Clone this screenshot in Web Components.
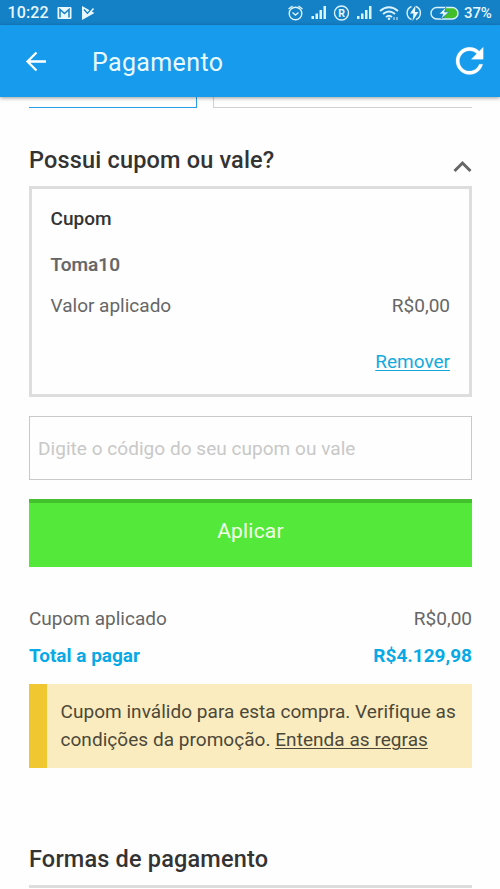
<!DOCTYPE html>
<html lang="pt-BR">
<head>
<meta charset="utf-8">
<title>Pagamento</title>
<style>
html,body{margin:0;height:889px;overflow:hidden;background:#fefefe}
body{font-family:Roboto,"Liberation Sans",sans-serif;color:#666}
</style>
</head>
<body>
<payment-page></payment-page>
<script>
const define=(name,html)=>customElements.define(name,class extends HTMLElement{
  constructor(){super();this.attachShadow({mode:'open'}).innerHTML=html;}
});

define('status-bar',`<style>
:host{display:flex;height:25px;box-sizing:border-box;padding:1px 8px 0 7.500px;align-items:center;justify-content:space-between;background:#1480c6;color:#e8f8ff;font-weight:500;font-size:16px;line-height:24px}
.left{display:flex;align-items:center}
.left span{width:49.500px;letter-spacing:.15px}
svg{display:block}
.pct{width:28px;font-size:15px;white-space:nowrap;letter-spacing:-.1px}
</style>
<div class="left"><span>10:22</span>
<svg width="40" height="24" viewBox="57 0 40 24"><rect x="57.500" y="6" width="14" height="12" rx="1" fill="#e8f8ff"/><path d="M60 16.500V8.500l4.500 4 4.500-4v8" fill="none" stroke="#1480c6" stroke-width="1.500"/><path d="M82 5l12.500 7-12.500 7z" fill="#e8f8ff"/><path d="M84 8.500l3.500 4 7-8" fill="none" stroke="#1480c6" stroke-width="1.500"/><path d="M83.500 10.500l4 4 6-7" fill="none" stroke="#e8f8ff" stroke-width="1.500"/></svg></div>
<svg width="174" height="24" viewBox="287 0 174 24" style="margin-left:auto;margin-right:3px" fill="none" stroke="#d9f3ff" stroke-width="1.400">
<circle cx="295.500" cy="12.500" r="6.300"/><path d="M288.500 8l4-3M302.500 8l-4-3M292.500 11.500l3 2.500 3-2.500"/>
<g fill="#d9f3ff" stroke="none"><path d="M311.500 15h2.500v3h-2.500zM315.500 12.500h2.500v5.500h-2.500zM319.500 9h2.500v9h-2.500zM323.500 5h2.500v13h-2.500z"/><path d="M357 15h2.500v3H357zM361 12.500h2.500v5.500H361zM365 9h2.500v9H365zM369 5h2.500v13H369z"/></g>
<circle cx="341.500" cy="12" r="7"/><text x="341.500" y="15.800" text-anchor="middle" font-size="10.500" font-weight="700" fill="#e8f8ff" stroke="none">R</text>
<g stroke-width="2"><path d="M380 10q9-7.500 18 0M383 13q6-5 12 0M386 16q3-2.500 6 0"/></g><circle cx="389" cy="17.800" r="1.300" fill="#d9f3ff" stroke="none"/><path d="M394 16v3M397 16v3" stroke-width="1"/>
<path d="M411.500 5.500a7 7 0 0 0 0 13M416 5.500a7 7 0 0 1 0 13"/><path d="M415.500 4.500l-5.500 8h3.500l-1 7.500 6-9h-3.500z" fill="#e8f8ff" stroke="none"/>
<path d="M446 7h8a4.500 4.500 0 0 1 4 4.500v1.500a4.500 4.500 0 0 1-4 4.500h-10z" fill="#43bd28" stroke="none"/><rect x="431" y="6.500" width="27" height="11.500" rx="5.700"/><path d="M446 6l-7 7h4l-2 5 8-7h-4.500z" fill="#e8f8ff" stroke="#1480c6" stroke-width=".6"/>
</svg><span class="pct">37%</span>`);

define('app-bar',`<style>
:host{display:flex;height:72px;align-items:center;background:#179bed;color:#e9faff;box-shadow:0 1px 4px #0006;position:relative;z-index:1}
svg{display:block;flex:none}
h1{font-size:25px;font-weight:400;margin:0 auto 0 44px;line-height:30px;letter-spacing:.36px;padding-top:3px}
</style>
<svg width="48" height="72" viewBox="0 25 48 72" fill="none" stroke="#fff" stroke-width="2.300"><path d="M46 61.500H27.500M36.500 52.500l-9 9 9 9"/></svg>
<h1><slot></slot></h1>
<svg width="48" height="72" viewBox="452 25 48 72"><path transform="translate(449.200 40.500) scale(1.700)" d="M17.650 6.350C16.200 4.900 14.210 4 12 4c-4.420 0-7.990 3.580-7.990 8s3.570 8 7.990 8c3.730 0 6.840-2.550 7.730-6h-2.080c-.82 2.330-3.040 4-5.650 4-3.310 0-6-2.690-6-6s2.690-6 6-6c1.660 0 3.140.69 4.220 1.780L13 11h7V4z" fill="#fff" stroke="#fff" stroke-width=".15"/></svg>`);

define('option-edges',`<style>
:host{display:grid;grid-template-columns:168px 259px;gap:16px;padding:0 29px;height:11px}
i{display:block;box-sizing:border-box;height:11px;border:solid #cfd2d3;border-width:0 0 1px 1px}
.selected{border:solid #2b9fe4;border-width:0 1px 1px 0}
</style><i class="selected"></i><i></i>`);

define('section-title',`<style>
:host{display:flex;justify-content:space-between;color:#333;font-size:23.500px;line-height:28px;font-weight:500}
h2{font:inherit;margin:0;letter-spacing:.17px}
</style><h2><slot></slot></h2><slot name="action"></slot>`);

define('value-row',`<style>
:host{display:flex;justify-content:space-between;font-size:19px;line-height:24px}
</style><span><slot></slot></span><span><slot name="value"></slot></span>`);

define('coupon-card',`<style>
:host{display:block;box-sizing:border-box;height:211px;border:3px solid #ddd;padding:18px 19px 0 18.500px;font-size:19px;line-height:24px}
h3,p{margin:0;font-size:19px}
h3{color:#333;font-weight:500}
.code{font-weight:500;margin:22px 0 17px;-webkit-text-stroke:.2px}
a{display:block;width:max-content;margin:32px 0 0 auto;color:#15aadd;text-decoration:underline;text-underline-offset:2px;text-decoration-thickness:1px}
</style><h3>Cupom</h3><p class="code"><slot name="code"></slot></p><value-row>Valor aplicado<span slot="value">R$0,00</span></value-row><a>Remover</a>`);

define('coupon-field',`<style>
:host{display:flex;align-items:center;box-sizing:border-box;height:64px;margin-top:19px;border:1px solid #c9c9c9;padding-left:8px;color:#c8c8c8;font-size:19px;letter-spacing:.04px}
</style><slot></slot>`);

define('apply-button',`<style>
:host{display:flex;align-items:center;justify-content:center;box-sizing:border-box;height:68px;margin-top:19px;border-top:4px solid #43c22e;background:#54e83a;color:#f4ffe9;font-size:21px;letter-spacing:.2px;padding-bottom:8px}
</style><slot></slot>`);

define('notice-box',`<style>
:host{display:block;box-sizing:border-box;height:84px;margin-top:16px;border-left:18px solid #f0c730;background:#faecbf;color:#4c4839;padding:14px 0 0 13.500px;font-size:19px;line-height:28px;white-space:nowrap;letter-spacing:.04px}
u{text-underline-offset:2px;text-decoration-thickness:1px}
</style>Cupom inválido para esta compra. Verifique as<br>condições da promoção. <u>Entenda as regras</u>`);

define('payment-page',`<style>
:host{display:block;height:889px;overflow:hidden}
main{padding:38px 28px 0 29px}
svg{display:block;margin-top:12px}
coupon-card{margin-top:12px}
.totals{display:grid;row-gap:13px;margin-top:40px}
.total{color:#08a9e4;font-weight:700}
.last{margin-top:77px;padding-bottom:12px;border-bottom:3px solid #ddd}
</style>
<status-bar></status-bar><app-bar>Pagamento</app-bar><option-edges></option-edges>
<main>
<section-title>Possui cupom ou vale?<svg slot="action" width="20" height="16" viewBox="0 0 20 16" fill="none" stroke="#666" stroke-width="3"><path d="M2.500 13l8-8 8 8"/></svg></section-title>
<coupon-card><span slot="code">Toma10</span></coupon-card>
<coupon-field>Digite o código do seu cupom ou vale</coupon-field>
<apply-button>Aplicar</apply-button>
<div class="totals"><value-row>Cupom aplicado<span slot="value">R$0,00</span></value-row><value-row class="total">Total a pagar<span slot="value">R$4.129,98</span></value-row></div>
<notice-box></notice-box>
<section-title class="last">Formas de pagamento</section-title>
</main>`);
</script>
</body>
</html>
